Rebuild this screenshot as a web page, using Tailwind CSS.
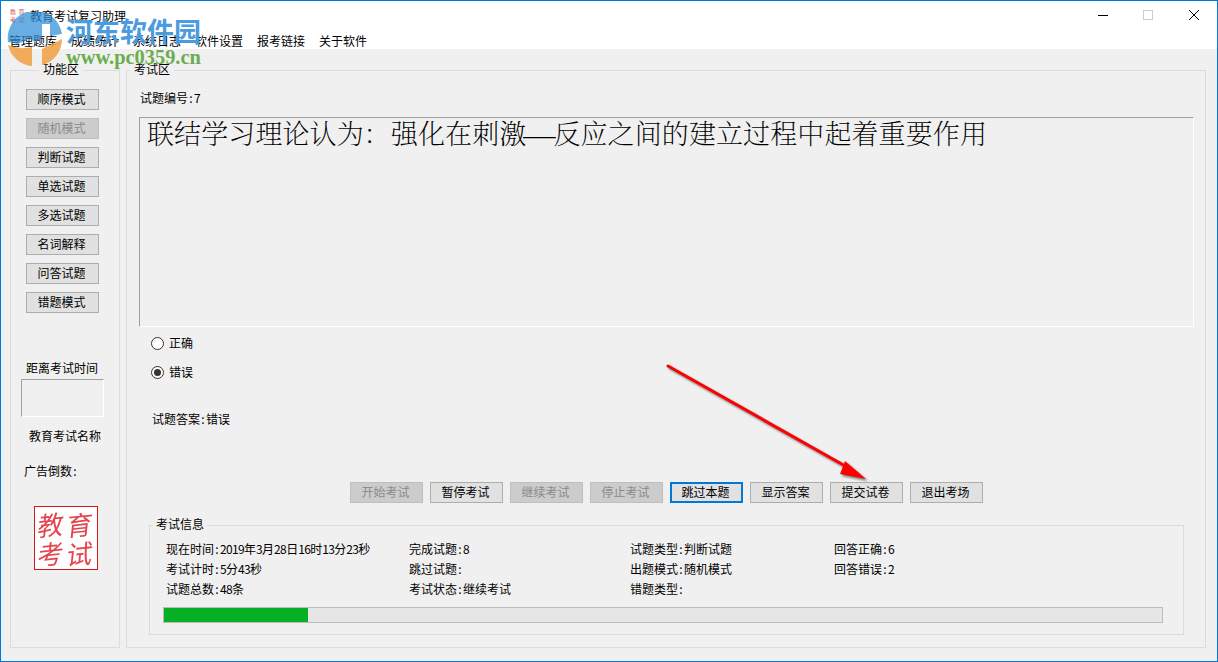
<!DOCTYPE html>
<html lang="zh"><head><meta charset="utf-8"><script src="https://cdn.jsdelivr.net/npm/@tailwindcss/browser@4"></script></head>
<body class="m-0 overflow-hidden bg-[#f0f0f0]">
<div class="relative w-[1218px] h-[662px] border border-[#0078d7] bg-[#f0f0f0] flex flex-col text-[12px] leading-[16px] text-black font-['Noto_Sans_CJK_SC',sans-serif] overflow-hidden">
  <header class="h-[48px] bg-white shrink-0 flex flex-col">
    <div class="h-[28px] flex items-center pl-[29px] pt-[2px]">
      <span>教育考试复习助理</span>
      <div class="ml-auto flex items-center">
        <svg class="w-[46px] h-[16px]" viewBox="0 0 46 16"><path d="M19 7.5h10" stroke="#000" stroke-width="1"/></svg>
        <svg class="w-[46px] h-[16px]" viewBox="0 0 46 16"><rect x="18.5" y="2.5" width="9" height="9" fill="none" stroke="#ccc"/></svg>
        <svg class="w-[46px] h-[16px]" viewBox="0 0 46 16"><path d="M18 2l10 10M28 2L18 12" stroke="#000" fill="none"/></svg>
      </div>
    </div>
    <nav class="flex gap-[14px] pl-[8px] pt-[4px]"><span>管理题库</span><span>成绩统计</span><span>系统日志</span><span>软件设置</span><span>报考链接</span><span>关于软件</span></nav>
  </header>
  <main class="flex gap-[6px] pl-[9px] pt-[21px] h-[598px]">
    <section class="relative w-[110px] h-[578px] border border-[#dcdcdc] flex flex-col items-start pt-[18px]">
      <span class="absolute left-[28px] -top-[10px] bg-[#f0f0f0] px-[4px]">功能区</span>
      <div class="flex flex-col gap-[8px] ml-[15px]">
        <button class="w-[73px] h-[21px] pb-[2px] pr-[2px] bg-[#e1e1e1] border border-[#adadad]">顺序模式</button>
        <button class="w-[73px] h-[21px] pb-[2px] pr-[2px] bg-[#cccccc] border border-[#bfbfbf] text-[#8a8a8a]">随机模式</button>
        <button class="w-[73px] h-[21px] pb-[2px] pr-[2px] bg-[#e1e1e1] border border-[#adadad]">判断试题</button>
        <button class="w-[73px] h-[21px] pb-[2px] pr-[2px] bg-[#e1e1e1] border border-[#adadad]">单选试题</button>
        <button class="w-[73px] h-[21px] pb-[2px] pr-[2px] bg-[#e1e1e1] border border-[#adadad]">多选试题</button>
        <button class="w-[73px] h-[21px] pb-[2px] pr-[2px] bg-[#e1e1e1] border border-[#adadad]">名词解释</button>
        <button class="w-[73px] h-[21px] pb-[2px] pr-[2px] bg-[#e1e1e1] border border-[#adadad]">问答试题</button>
        <button class="w-[73px] h-[21px] pb-[2px] pr-[2px] bg-[#e1e1e1] border border-[#adadad]">错题模式</button>
      </div>
      <div class="mt-[47px] ml-[15px]">距离考试时间</div>
      <div class="mt-[3px] ml-[10px] w-[83px] h-[38px] border border-t-[#a0a0a0] border-l-[#a0a0a0] border-r-white border-b-white"></div>
      <div class="mt-[11px] ml-[18px]">教育考试名称</div>
      <div class="mt-[19px] ml-[13px]">广告倒数<span class="inline-block w-[6px] text-center">:</span></div>
      <div class="mt-[27px] ml-[23px] w-[64px] h-[64px] border border-[#d01818] bg-white grid grid-cols-2 place-items-center p-[2px] text-[#e4444e] text-[26px] leading-[29px] font-['Noto_Sans_CJK_SC',serif] blur-[0.5px]"><span class="-skew-x-12 -rotate-6">教</span><span class="-skew-x-12 -rotate-6">育</span><span class="-skew-x-12 -rotate-6">考</span><span class="-skew-x-12 -rotate-6">试</span></div>
    </section>
    <section class="relative w-[1080px] h-[578px] border border-[#dcdcdc]">
      <span class="absolute left-[3px] -top-[10px] bg-[#f0f0f0] px-[4px]">考试区</span>
      <div class="absolute left-[13px] top-[19px]">试题编号<span class="inline-block w-[6px] text-center">:</span><span>7</span></div>
      <div class="absolute left-[12px] top-[46px] w-[1055px] h-[210px] border border-t-[#a0a0a0] border-l-[#a0a0a0] border-r-white border-b-white pl-[7px] text-[27px] tracking-[0.1px] leading-[30px] whitespace-nowrap font-extralight font-['Noto_Serif_CJK_SC','Noto_Sans_CJK_SC',serif]">联结学习理论认为：强化在刺激<span class="inline-block w-[27px] text-center scale-x-[1.2] font-['Liberation_Serif',serif]">—</span>反应之间的建立过程中起着重要作用</div>
      <label class="absolute left-[24px] top-[264px] flex items-center gap-[5px]"><span class="w-[13px] h-[13px] rounded-full border border-[#333] bg-white"></span>正确</label>
      <label class="absolute left-[24px] top-[293px] flex items-center gap-[5px]"><span class="w-[13px] h-[13px] rounded-full border border-[#333] bg-white flex items-center justify-center"><span class="w-[7px] h-[7px] rounded-full bg-[#333]"></span></span>错误</label>
      <div class="absolute left-[25px] top-[340px]">试题答案<span class="inline-block w-[6px] text-center">:</span>错误</div>
      <div class="absolute left-[223px] top-[411px] flex gap-[7px]">
        <button class="w-[73px] h-[21px] pb-[2px] pr-[2px] bg-[#cccccc] border border-[#bfbfbf] text-[#8a8a8a]">开始考试</button>
        <button class="w-[73px] h-[21px] pb-[2px] pr-[2px] bg-[#e1e1e1] border border-[#adadad]">暂停考试</button>
        <button class="w-[73px] h-[21px] pb-[2px] pr-[2px] bg-[#cccccc] border border-[#bfbfbf] text-[#8a8a8a]">继续考试</button>
        <button class="w-[73px] h-[21px] pb-[2px] pr-[2px] bg-[#cccccc] border border-[#bfbfbf] text-[#8a8a8a]">停止考试</button>
        <button class="w-[73px] h-[21px] pb-[2px] pr-[2px] bg-[#e1e1e1] border-2 border-[#0078d7]">跳过本题</button>
        <button class="w-[73px] h-[21px] pb-[2px] pr-[2px] bg-[#e1e1e1] border border-[#adadad]">显示答案</button>
        <button class="w-[73px] h-[21px] pb-[2px] pr-[2px] bg-[#e1e1e1] border border-[#adadad]">提交试卷</button>
        <button class="w-[73px] h-[21px] pb-[2px] pr-[2px] bg-[#e1e1e1] border border-[#adadad]">退出考场</button>
      </div>
      <div class="absolute left-[22px] top-[454px] w-[1035px] h-[110px] border border-[#dcdcdc]">
        <span class="absolute left-[3px] -top-[10px] bg-[#f0f0f0] px-[3px]">考试信息</span>
        <div class="absolute left-[16px] top-[13px] leading-[20px] whitespace-nowrap">
          <div>现在时间<span class="inline-block w-[6px] text-center">:</span><span class="tracking-[-0.65px]">2019</span>年<span class="tracking-[-0.65px]">3</span>月<span class="tracking-[-0.65px]">28</span>日<span class="tracking-[-0.65px]">16</span>时<span class="tracking-[-0.65px]">13</span>分<span class="tracking-[-0.65px]">23</span>秒</div>
          <div>考试计时<span class="inline-block w-[6px] text-center">:</span><span class="tracking-[-0.65px]">5</span>分<span class="tracking-[-0.65px]">43</span>秒</div>
          <div>试题总数<span class="inline-block w-[6px] text-center">:</span><span class="tracking-[-0.65px]">48</span>条</div>
        </div>
        <div class="absolute left-[259px] top-[13px] leading-[20px] whitespace-nowrap">
          <div>完成试题<span class="inline-block w-[6px] text-center">:</span><span>8</span></div>
          <div>跳过试题<span class="inline-block w-[6px] text-center">:</span></div>
          <div>考试状态<span class="inline-block w-[6px] text-center">:</span>继续考试</div>
        </div>
        <div class="absolute left-[480px] top-[13px] leading-[20px] whitespace-nowrap">
          <div>试题类型<span class="inline-block w-[6px] text-center">:</span>判断试题</div>
          <div>出题模式<span class="inline-block w-[6px] text-center">:</span>随机模式</div>
          <div>错题类型<span class="inline-block w-[6px] text-center">:</span></div>
        </div>
        <div class="absolute left-[684px] top-[13px] leading-[20px] whitespace-nowrap">
          <div>回答正确<span class="inline-block w-[6px] text-center">:</span><span>6</span></div>
          <div>回答错误<span class="inline-block w-[6px] text-center">:</span><span>2</span></div>
        </div>
        <div class="absolute left-[13px] top-[81px] w-[1000px] h-[16px] border border-[#bcbcbc] bg-[#e6e6e6]"><div class="h-full bg-[#06b025] w-[144px]"></div></div>
      </div>
    </section>
  </main>
  <div class="absolute left-[9px] top-[7px] grid grid-cols-2 gap-x-[2px] w-[15px] text-[6px] leading-[8px] text-[#e0505a]"><span>教</span><span>育</span><span>考</span><span>试</span></div>
  <svg class="absolute left-[5px] top-[11px]" width="60" height="56" viewBox="0 0 60 56">
    <path d="M2 30A27 27 0 0 1 56 22L44 24V12H36V26L29 30L24 26L12 32z" fill="#2f8fd8" opacity=".72"/>
    <path d="M2 33Q14 38 26 35V54A27 27 0 0 1 2 33z" fill="#f2a24a" opacity=".9"/>
    <path d="M36 37L56 27A27 27 0 0 1 36 53z" fill="#f2a24a" opacity=".9"/>
  </svg>
  <div class="absolute left-[65px] top-[12px] text-[#4a9be0] text-[27px] leading-[36px] font-bold whitespace-nowrap">河东软件园</div>
  <div class="absolute left-[65px] top-[46px] text-[#6aad4e] text-[20.4px] leading-[20px] font-bold font-['Liberation_Serif',serif] whitespace-nowrap">www.pc0359.cn</div>
  <svg class="absolute left-[660px] top-[358px] drop-shadow-[2px_2px_1px_rgba(0,0,0,0.5)]" width="220" height="130" viewBox="0 0 220 130">
    <path d="M7 7L186 108" stroke="#f00" stroke-width="3" stroke-linecap="round"/>
    <path d="M205 120L184 102L179 115z" fill="#f00"/>
  </svg>
</div>
</body></html>
